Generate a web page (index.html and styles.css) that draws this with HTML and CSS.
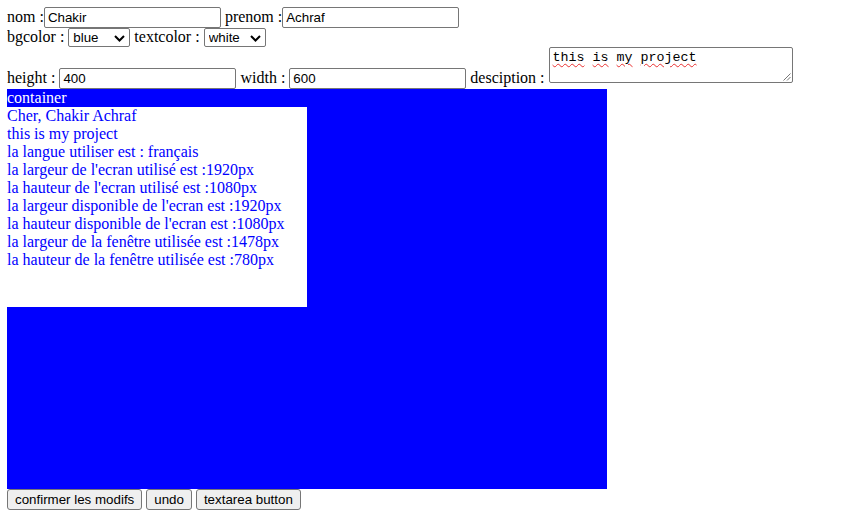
FILE: index.html
```html
<!DOCTYPE html>
<html>
<head>
<meta charset="utf-8">
<link rel="stylesheet" href="styles.css">
</head>
<body>
<div class="form">
  <label>nom :</label><input class="field" type="text" value="Chakir"> <label>prenom :</label><input class="field" type="text" value="Achraf"><br>
  <label>bgcolor :</label> <span class="selwrap"><select class="sel"><option>blue</option></select><svg class="chev" width="11" height="7" viewBox="0 0 11 7"><path d="M1 1 L5.5 5.5 L10 1" fill="none" stroke="#000" stroke-width="2"/></svg></span> <label>textcolor :</label> <span class="selwrap"><select class="sel"><option>white</option></select><svg class="chev" width="11" height="7" viewBox="0 0 11 7"><path d="M1 1 L5.5 5.5 L10 1" fill="none" stroke="#000" stroke-width="2"/></svg></span><br>
  <label>height :</label> <input class="field" type="text" value="400"> <label>width :</label> <input class="field" type="text" value="600"> <label>desciption :</label> <div class="textarea"><span class="sq">this</span> <span class="sq">is</span> <span class="sq">my</span> <span class="sq">project</span><svg class="grip" width="9" height="9" viewBox="0 0 9 9"><path d="M8.5 1.5 L1.5 8.5 M8.5 5 L5 8.5" stroke="#777" stroke-width="1"/></svg></div>
</div>
<div class="container">
  <div class="head">container</div>
  <div class="inner">
    <div>Cher, Chakir Achraf</div>
    <div>this is my project</div>
    <div>la langue utiliser est : français</div>
    <div>la largeur de l'ecran utilisé est :1920px</div>
    <div>la hauteur de l'ecran utilisé est :1080px</div>
    <div>la largeur disponible de l'ecran est :1920px</div>
    <div>la hauteur disponible de l'ecran est :1080px</div>
    <div>la largeur de la fenêtre utilisée est :1478px</div>
    <div>la hauteur de la fenêtre utilisée est :780px</div>
  </div>
</div>
<div class="buttons"><button class="btn">confirmer les modifs</button> <button class="btn">undo</button> <button class="btn">textarea button</button></div>
</body>
</html>
```
FILE: styles.css
```css
body {
  margin: 7px;
  font-family: "Liberation Serif", "Times New Roman", serif;
  font-size: 16px;
  line-height: normal;
  color: #000;
  background: #fff;
}
.field {
  box-sizing: border-box;
  width: 177px;
  height: 21px;
  margin: 0;
  padding: 1px 3px;
  border: 1px solid #767676;
  border-radius: 2px;
  font-family: "Liberation Sans", Arial, sans-serif;
  font-size: 13.33px;
  color: #000;
  vertical-align: baseline;
}
.selwrap {
  position: relative;
  display: inline-block;
}
.sel {
  -webkit-appearance: none;
  appearance: none;
  box-sizing: border-box;
  width: 62px;
  height: 19px;
  margin: 0;
  padding: 0 0 0 4px;
  border: 1px solid #767676;
  border-radius: 2px;
  font-family: "Liberation Sans", Arial, sans-serif;
  font-size: 13.33px;
  color: #000;
  background: #fff;
}
.chev {
  position: absolute;
  right: 5px;
  top: 7px;
  pointer-events: none;
}
.textarea {
  display: inline-block;
  position: relative;
  overflow: hidden;
  box-sizing: border-box;
  width: 244px;
  height: 36px;
  margin: 0;
  padding: 2px 3px;
  border: 1px solid #767676;
  border-radius: 2px;
  font-family: "Liberation Mono", "Courier New", monospace;
  font-size: 13.33px;
  line-height: 15px;
  vertical-align: baseline;
}
.sq {
  text-decoration: underline wavy #e83030;
  text-decoration-thickness: 1px;
  text-underline-offset: 2px;
}
.grip {
  position: absolute;
  right: 1px;
  bottom: 1px;
}
.container {
  width: 600px;
  height: 400px;
  background: #0000ff;
}
.head {
  color: #fff;
}
.inner {
  width: 300px;
  height: 200px;
  background: #fff;
  color: #0000ff;
}
.btn {
  margin: 0;
  padding: 1px 7px;
  height: 21px;
  border: 1px solid #767676;
  border-radius: 3px;
  background: #efefef;
  font-family: "Liberation Sans", Arial, sans-serif;
  font-size: 13.33px;
  color: #000;
}
.buttons {
  line-height: 18px;
}
```
